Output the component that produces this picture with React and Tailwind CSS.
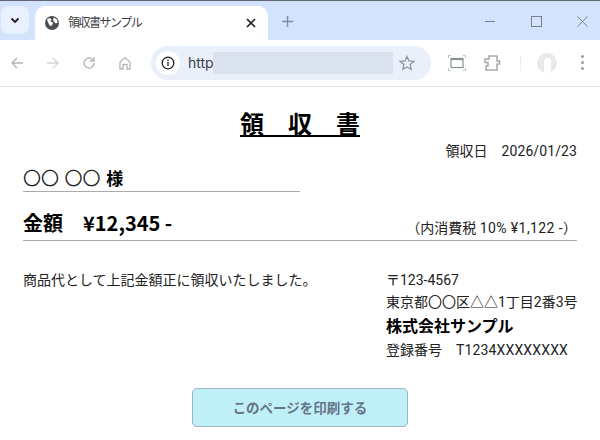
import React from "react";

const jp = "font-['Roboto','Noto_Sans_CJK_JP',sans-serif]";
const bold = "font-['Noto_Sans_CJK_JP',sans-serif] font-bold";

function Btn({ children, className = "" }) {
  return <div className={`flex items-center justify-center w-[20px] h-[20px] ${className}`}>{children}</div>;
}

export default function App() {
  return (
    <div className={`w-[600px] h-[440px] overflow-hidden bg-white flex flex-col ${jp}`}>
      {/* Tab strip */}
      <div className="h-[40px] bg-[#d3e3fd] border-t border-[#5f6670] flex items-end shrink-0">
        <div className="w-[28px] h-[28px] ml-[1px] mb-[6px] rounded-[8px] bg-[#e9f1fe] flex items-center justify-center">
          <svg width="10" height="7" viewBox="0 0 10 7" fill="none" stroke="#1f1f1f" strokeWidth="1.8"><path d="M1.5 1.5 5 5l3.5-3.5" /></svg>
        </div>
        <div className="w-[233px] h-[34px] ml-[6px] bg-white rounded-t-[10px] flex items-center pl-[9px] pr-[12px]">
          <svg width="16" height="16" viewBox="0 0 16 16">
            <circle cx="8" cy="8" r="7" fill="#4a4d52" />
            <path d="M3 4.500 5.500 3 7.500 4.200 6.500 6l2.500 2-1 2.500-2 .5-1.500-2.500zM10 2.500l3 2 .8 3-2 1-2.300-2.200-.5-2z" fill="#fff" />
          </svg>
          <span className="ml-[8px] text-[12px] leading-[16px] tracking-[-1.5px] text-[#3c4043] whitespace-nowrap">領収書サンプル</span>
          <svg className="ml-auto" width="10" height="10" viewBox="0 0 10 10" stroke="#1f1f1f" strokeWidth="1.7"><path d="M1 1l8 8M9 1 1 9" /></svg>
        </div>
        <svg className="ml-[14px] mb-[13px]" width="11" height="11" viewBox="0 0 11 11" stroke="#7f8ba0" strokeWidth="1.4"><path d="M5.5 0v11M0 5.500h11" /></svg>
        <div className="ml-auto flex items-center gap-[35px] mb-[13px] mr-[12px]">
          <svg width="11" height="11" viewBox="0 0 11 11" stroke="#7b818a" strokeWidth="1"><path d="M0 5.5h10" /></svg>
          <svg width="11" height="11" viewBox="0 0 11 11" fill="none" stroke="#7b818a" strokeWidth="1"><rect x=".5" y=".5" width="10" height="10" /></svg>
          <svg width="11" height="11" viewBox="0 0 11 11" stroke="#7b818a" strokeWidth="1"><path d="M.5.5l10 10M10.500.5l-10 10" /></svg>
        </div>
      </div>

      {/* Toolbar */}
      <div className="h-[47px] shrink-0 bg-white border-b border-[#e3e3e3] flex items-center pl-[7px] pb-[1px]">
        <Btn>
          <svg width="14" height="14" viewBox="0 0 14 14" fill="none" stroke="#b4b6b8" strokeWidth="1.4"><path d="M13 7H2M7 2 2 7l5 5" /></svg>
        </Btn>
        <Btn className="ml-[16px]">
          <svg width="14" height="14" viewBox="0 0 14 14" fill="none" stroke="#d4d5d7" strokeWidth="1.4"><path d="M1 7h11M7 2l5 5-5 5" /></svg>
        </Btn>
        <Btn className="ml-[16px]">
          <svg width="14" height="14" viewBox="0 0 14 14" fill="none" stroke="#b4b6b8" strokeWidth="1.4"><path d="M12 7a5 5 0 1 1-1.500-3.500L12 5M12 1v4H8" /></svg>
        </Btn>
        <Btn className="ml-[16px]">
          <svg width="14" height="14" viewBox="0 0 14 14" fill="none" stroke="#b4b6b8" strokeWidth="1.3"><path d="M2 13V6l5-4.500L12 6v7H9V8.500H5V13z" /></svg>
        </Btn>
        <div className="ml-[16px] w-[280px] h-[34px] rounded-full bg-[#e9f0fa] flex items-center pl-[5px]">
          <div className="w-[24px] h-[24px] rounded-full bg-white flex items-center justify-center shrink-0">
            <svg width="14" height="14" viewBox="0 0 14 14" fill="none" stroke="#1f1f1f" strokeWidth="1.3"><circle cx="7" cy="7" r="5.800" /><path d="M7 6v4M7 3.600v1.300" /></svg>
          </div>
          <span className="ml-[8px] w-[25px] text-[14px] leading-[20px] text-[#3a3f47] font-['Inter',sans-serif]">http</span>
          <div className="w-[180px] h-[22px] bg-[#dbe2ef] shrink-0" />
          <svg className="ml-[6px]" width="16" height="16" viewBox="0 0 16 16" fill="none" stroke="#8f959c" strokeWidth="1.300"><path d="M8 1.500l2 4.400 4.800.5-3.600 3.200 1 4.700L8 11.900l-4.200 2.400 1-4.700L1.200 6.400 6 5.900z" /></svg>
        </div>
        <svg className="ml-[17px]" width="18" height="16" viewBox="0 0 18 16" fill="none">
          <rect x="3" y="3.500" width="12" height="9" stroke="#8a8f95" strokeWidth="1.200" />
          <path d="M3 4.500h12" stroke="#8a8f95" strokeWidth="1.200" />
          <path d="M.500 3V.500H3M15 .500h2.500V3M.500 13v2.500H3M15 15.500h2.500V13" stroke="#a8d3a8" strokeWidth="1" />
        </svg>
        <svg className="ml-[18px]" width="17" height="16" viewBox="0 0 17 16" fill="none" stroke="#a8a9ab" strokeWidth="1.500"><path d="M1 4h4V1h8v5h2.500v3H13v6H2v-4h2V7.500H1z" /></svg>
        <div className="ml-[19px] w-[1px] h-[16px] bg-[#e4edf9]" />
        <div className="ml-[16px] w-[20px] h-[20px] rounded-full bg-[#e9e9e9] flex items-end justify-center overflow-hidden">
          <div className="w-[7px] h-[15px] rounded-t-full bg-white" />
        </div>
        <div className="ml-[24px] flex flex-col gap-[3px]">
          <div className="w-[3px] h-[3px] rounded-full bg-[#9b9ea2]" />
          <div className="w-[3px] h-[3px] rounded-full bg-[#9b9ea2]" />
          <div className="w-[3px] h-[3px] rounded-full bg-[#9b9ea2]" />
        </div>
      </div>

      {/* Page */}
      <div className="flex-1 px-[23px] text-black">
        <h1 className={`text-[24px] leading-[36px] text-center underline mt-[18px] whitespace-pre ${bold}`}>領　収　書</h1>
        <div className="text-[14px] leading-[20px] text-right text-[#222]">領収日　<span className="tracking-[0.1px]">2026/01/23</span></div>
        <div className={`w-[277px] mt-[3px] border-b border-[#aaa] text-[18px] leading-[27px] h-[28px] [word-spacing:1.5px] ${bold}`}><span className="font-normal text-[#222]">〇〇 〇〇</span> <span className="text-[17px]">様</span></div>
        <div className="flex items-end justify-between border-b border-[#aaa] h-[42px] mt-[7px]">
          <span className={`text-[20px] leading-[34px] ${bold}`}>金額　¥12,345 -</span>
          <span className="text-[14px] leading-[24px] text-[#222] [text-spacing-trim:space-all]">（内消費税 <span className="tracking-[0.4px]">10% ¥1,122 -</span>）</span>
        </div>
        <div className="flex justify-between mt-[28px]">
          <p className="text-[14px] leading-[24px] -mt-[1px] text-[#222]">商品代として上記金額正に領収いたしました。</p>
          <div className="w-[191px] text-[14px] text-[#222] whitespace-nowrap">
            <div className="leading-[22px]">〒123-4567</div>
            <div className="leading-[22px]">東京都〇〇区△△1丁目2番3号</div>
            <div className={`text-[16px] text-black leading-[24px] ${bold}`}>株式会社サンプル</div>
            <div className="leading-[26px]">登録番号　<span className="tracking-[0.15px]">T1234XXXXXXXX</span></div>
          </div>
        </div>
        <div className="flex justify-center mt-[25px]">
          <button className={`w-[216px] h-[39px] rounded-[5px] bg-[#c0f0f7] border border-[#9fb3c8] text-[13.5px] text-[#64748b] ${bold}`}>このページを印刷する</button>
        </div>
      </div>
    </div>
  );
}
